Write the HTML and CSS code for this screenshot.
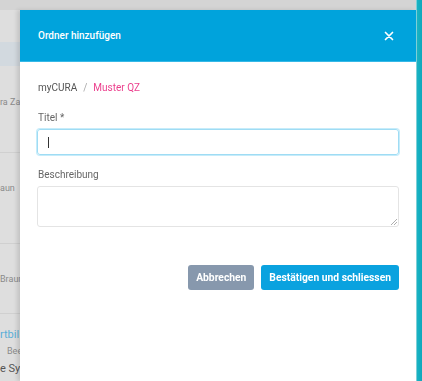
FILE: index.html
```html
<!DOCTYPE html>
<html lang="de">
	<head>
		<meta charset="UTF-8" />
		<meta name="viewport" content="width=device-width, initial-scale=1.0" />
		<title>Ordner hinzufügen</title>
		<link rel="stylesheet" href="styles.css">
	</head>
	<body>
		<div class="page">
			<div class="page-top"></div>
			<div class="page-list">
				<div class="row row-active"></div>
				<div class="row row-one"><span class="row-text">ra Za</span></div>
				<div class="row row-two"><span class="row-text">aun</span></div>
				<div class="row row-three"><span class="row-text">Braun</span></div>
				<div class="row row-four">
					<span class="row-link">rtbil</span>
					<span class="row-text">Beet</span>
					<span class="row-strong">e Sym</span>
				</div>
			</div>
		</div>
		<div class="side-strip"></div>

		<div class="modal">
			<div class="modal-header">
				<span class="modal-title">Ordner hinzufügen</span>
				<svg class="modal-close" width="10" height="10" viewBox="0 0 10 10">
					<path d="M1.5 1.5 L8.5 8.5 M8.5 1.5 L1.5 8.5" stroke="#fff" stroke-width="1.7" stroke-linecap="round" />
				</svg>
			</div>
			<div class="modal-body">
				<div class="breadcrumb">
					<span class="crumb">myCURA</span>
					<span class="crumb-sep">/</span>
					<span class="crumb-current">Muster QZ</span>
				</div>
				<label class="field-label">Titel *</label>
				<div class="input input-focus"><span class="caret"></span></div>
				<label class="field-label">Beschreibung</label>
				<div class="textarea">
					<svg class="resize" width="7" height="7" viewBox="0 0 7 7">
						<path d="M7 1 L1 7 M7 4 L4 7" stroke="#999" stroke-width="0.8" />
					</svg>
				</div>
				<div class="actions">
					<button class="btn btn-cancel">Abbrechen</button>
					<button class="btn btn-confirm">Bestätigen und schliessen</button>
				</div>
			</div>
		</div>
	</body>
</html>
```

FILE: styles.css
```css
body {
	margin: 0;
	width: 422px;
	height: 381px;
	overflow: hidden;
	font-family: Roboto, "Liberation Sans", sans-serif;
	background: #dedede;
}
.page {
	display: flex;
	flex-direction: column;
	height: 381px;
}
.page-top {
	height: 10px;
	background: #d4d4d4;
}
.page-list {
	display: flex;
	flex-direction: column;
	padding-top: 32px;
}
.row {
	border-bottom: 1px solid #d0d0d0;
	box-sizing: border-box;
}
.row-active {
	height: 24px;
	background: #d2d9df;
	border-bottom: none;
}
.row-one {
	height: 87px;
	padding-top: 24px;
}
.row-two {
	height: 91px;
	padding-top: 23px;
}
.row-three {
	height: 70px;
	padding-top: 23px;
}
.row-four {
	display: flex;
	flex-direction: column;
	padding-top: 13px;
	border-bottom: none;
}
.row-text {
	font-size: 9px;
	color: #8a8a8a;
	line-height: 14px;
}
.row-link {
	font-size: 11px;
	color: #5aaed8;
	line-height: 16px;
}
.row-four .row-text {
	padding-left: 7px;
	line-height: 16px;
}
.row-strong {
	font-size: 11px;
	color: #555;
	line-height: 20px;
}

.side-strip {
	position: fixed;
	top: 0;
	right: 0;
	width: 6px;
	height: 381px;
	background: linear-gradient(to right, #7fd0d8 0, #7fd0d8 1px, #19b3c4 1px, #0fa8bc 100%);
}

.modal {
	position: fixed;
	top: 10px;
	left: 20px;
	width: 396px;
	height: 371px;
	background: #fff;
	box-shadow: -3px 0 4px rgba(0, 0, 0, 0.12);
}
.modal-header {
	display: flex;
	align-items: center;
	justify-content: space-between;
	height: 52px;
	padding: 0 22px 0 18px;
	background: #00a3dc;
	border-bottom: 1px solid #36b8e6;
	box-sizing: border-box;
}
.modal-title {
	color: #fff;
	font-size: 10px;
	font-weight: 500;
}
.modal-close {
	display: block;
}
.modal-body {
	display: flex;
	flex-direction: column;
	padding: 19px 17px 0 17px;
}
.breadcrumb {
	display: flex;
	gap: 6px;
	font-size: 10px;
	line-height: 14px;
	padding-left: 1px;
}
.crumb {
	color: #555;
}
.crumb-sep {
	color: #aaa;
}
.crumb-current {
	color: #ec3f8d;
}
.field-label {
	margin-top: 16px;
	padding-left: 1px;
	font-size: 10px;
	line-height: 13px;
	color: #666;
}
.input {
	display: flex;
	align-items: center;
	margin-top: 5px;
	height: 26px;
	border: 1px solid #e2e2e2;
	border-radius: 3px;
	box-sizing: border-box;
}
.input-focus {
	border-color: #9fdcf4;
	box-shadow: 0 0 0 1px #c6ecfa;
}
.caret {
	display: block;
	width: 1px;
	height: 11px;
	margin-left: 10px;
	background: #333;
}
.input + .field-label {
	margin-top: 13px;
}
.textarea {
	position: relative;
	margin-top: 5px;
	height: 41px;
	border: 1px solid #e4e4e4;
	border-radius: 3px;
	box-sizing: border-box;
}
.resize {
	position: absolute;
	right: 1px;
	bottom: 1px;
}
.actions {
	display: flex;
	justify-content: flex-end;
	gap: 7px;
	margin-top: 38px;
}
.btn {
	height: 25px;
	padding: 0 8px;
	border: none;
	border-radius: 3px;
	color: #fff;
	font-family: Roboto, "Liberation Sans", sans-serif;
	font-size: 10.3px;
	font-weight: 700;
}
.btn-cancel {
	background: #8798ad;
}
.btn-confirm {
	background: #0aa2df;
}
```
